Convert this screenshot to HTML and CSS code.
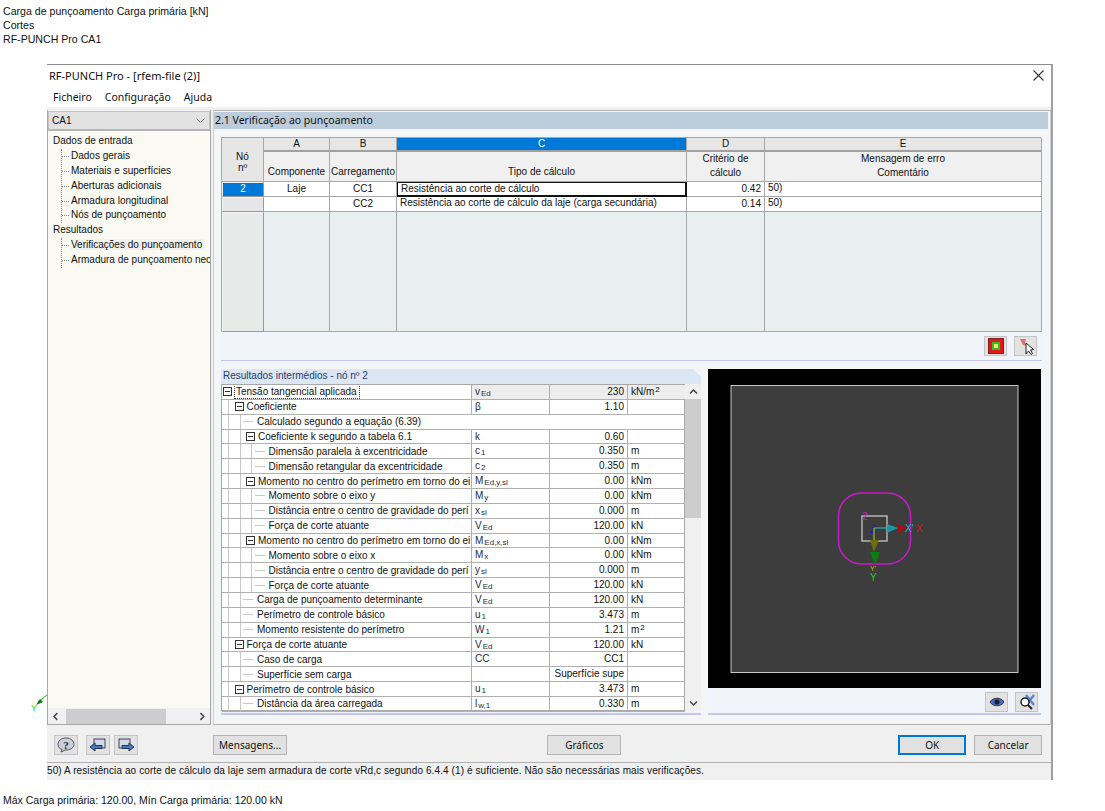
FILE: index.html
```html
<!DOCTYPE html>
<html lang="pt">
<head>
<meta charset="utf-8">
<title>RF-PUNCH Pro</title>
<link rel="stylesheet" href="styles.css">
</head>
<body>
<div class="cap"><div>Carga de punçoamento Carga primária [kN]</div><div>Cortes</div><div>RF-PUNCH Pro CA1</div></div>
<svg class="axis" width="20" height="20" viewBox="0 0 20 20"><path d="M18 1 L9 8" stroke="#00d000" fill="none"/><path d="M11 5 L14 8 L7 11 Z" fill="#007a00"/><text x="2" y="17" class="axt" fill="#00e000">Y</text></svg>
<div class="win">
  <div class="title"><span>RF-PUNCH Pro - [rfem-file (2)]</span>
    <svg width="11" height="11" viewBox="0 0 11 11"><path d="M.5 .5 L10.5 10.5 M10.5 .5 L.5 10.5" stroke="#333" stroke-width="1.1"/></svg></div>
  <div class="menu"><span>Ficheiro</span><span>Configuração</span><span>Ajuda</span></div>
  <div class="body">
    <aside class="side">
      <div class="combo"><span>CA1</span><svg width="9" height="5" viewBox="0 0 9 5"><path d="M.5 .5 L4.5 4.5 L8.500 .5" stroke="#888" fill="none"/></svg></div>
      <div class="tree">
        <div class="t0">Dados de entrada</div>
        <div class="tgroup">
          <div class="t1">Dados gerais</div>
          <div class="t1">Materiais e superfícies</div>
          <div class="t1">Aberturas adicionais</div>
          <div class="t1">Armadura longitudinal</div>
          <div class="t1">Nós de punçoamento</div>
        </div>
        <div class="t0">Resultados</div>
        <div class="tgroup">
          <div class="t1"><span class="sel">Verificações do punçoamento</span></div>
          <div class="t1">Armadura de punçoamento nec</div>
        </div>
      </div>
      <div class="hscroll">
        <svg width="7" height="9" viewBox="0 0 7 9"><path d="M5.5 1 L2 4.5 L5.5 8" stroke="#444" stroke-width="1.5" fill="none"/></svg>
        <div class="hthumb"></div>
        <svg width="7" height="9" viewBox="0 0 7 9"><path d="M1.5 1 L5 4.5 L1.5 8" stroke="#444" stroke-width="1.5" fill="none"/></svg>
      </div>
    </aside>
    <main class="main">
      <div class="head">2.1 Verificação ao punçoamento</div>
      <div class="upper">
        <div class="grid">
          <div class="c hc no">Nó<br>nº</div>
          <div class="c lt">A</div><div class="c lt">B</div><div class="c lt on">C</div><div class="c lt">D</div><div class="c lt">E</div>
          <div class="c hc bot">Componente</div><div class="c hc bot">Carregamento</div><div class="c hc bot">Tipo de cálculo</div>
          <div class="c hc two">Critério de<br>cálculo</div><div class="c hc two">Mensagem de erro<br>Comentário</div>
          <div class="c rh on">2</div><div class="c mid">Laje</div><div class="c mid">CC1</div><div class="c act">Resistência ao corte de cálculo</div><div class="c rt">0.42</div><div class="c txt">50)</div>
          <div class="c rh"></div><div class="c mid"></div><div class="c mid">CC2</div><div class="c txt">Resistência ao corte de cálculo da laje (carga secundária)</div><div class="c rt">0.14</div><div class="c txt">50)</div>
          <div class="c rh emp"></div><div class="c emp"></div><div class="c emp"></div><div class="c emp"></div><div class="c emp"></div><div class="c emp"></div>
        </div>
        <div class="tools">
          <button class="ib"><svg width="16" height="16" viewBox="0 0 16 16"><rect x="0" y="0" width="16" height="16" fill="#7a2020"/><rect x="1" y="1" width="14" height="14" fill="#e01818"/><rect x="4" y="4" width="8" height="8" fill="#38b838"/><rect x="6" y="6" width="4" height="4" fill="#f0f040"/></svg></button>
          <button class="ib"><svg width="18" height="18" viewBox="0 0 18 18"><path d="M3 2 L9 2 L8 6 L10 9 L6 8 Z" fill="#e07070"/><path d="M9 6 L9 17 L11.5 14 L14 17.5 L15.5 16.5 L13.5 13 L16.5 12.5 Z" fill="#fff" stroke="#222"/></svg></button>
        </div>
      </div>
      <div class="lower">
        <div class="res">
          <div class="restitle">Resultados intermédios - nó nº 2</div>
          <div class="reswrap">
            <div class="rtable">
              <div class="n fst"><i class="b"></i><span class="foc">Tensão tangencial aplicada</span></div><div class="s fst">v<sub>Ed</sub></div><div class="v fst">230</div><div class="u fst">kN/m<sup>2</sup></div>
              <div class="n"><i class="g"></i><i class="b"></i>Coeficiente</div><div class="s">β</div><div class="v">1.10</div><div class="u"></div>
              <div class="n wide"><i class="g"></i><i class="g"></i><i class="d"></i>Calculado segundo a equação (6.39)</div>
              <div class="n"><i class="g"></i><i class="g"></i><i class="b"></i>Coeficiente k segundo a tabela 6.1</div><div class="s">k</div><div class="v">0.60</div><div class="u"></div>
              <div class="n"><i class="g"></i><i class="g"></i><i class="g"></i><i class="d"></i>Dimensão paralela à excentricidade</div><div class="s">c<sub>1</sub></div><div class="v">0.350</div><div class="u">m</div>
              <div class="n"><i class="g"></i><i class="g"></i><i class="g"></i><i class="d"></i>Dimensão retangular da excentricidade</div><div class="s">c<sub>2</sub></div><div class="v">0.350</div><div class="u">m</div>
              <div class="n"><i class="g"></i><i class="g"></i><i class="b"></i>Momento no centro do perímetro em torno do ei</div><div class="s">M<sub>Ed,y,sl</sub></div><div class="v">0.00</div><div class="u">kNm</div>
              <div class="n"><i class="g"></i><i class="g"></i><i class="g"></i><i class="d"></i>Momento sobre o eixo y</div><div class="s">M<sub>y</sub></div><div class="v">0.00</div><div class="u">kNm</div>
              <div class="n"><i class="g"></i><i class="g"></i><i class="g"></i><i class="d"></i>Distância entre o centro de gravidade do perí</div><div class="s">x<sub>sl</sub></div><div class="v">0.000</div><div class="u">m</div>
              <div class="n"><i class="g"></i><i class="g"></i><i class="g"></i><i class="d"></i>Força de corte atuante</div><div class="s">V<sub>Ed</sub></div><div class="v">120.00</div><div class="u">kN</div>
              <div class="n"><i class="g"></i><i class="g"></i><i class="b"></i>Momento no centro do perímetro em torno do ei</div><div class="s">M<sub>Ed,x,sl</sub></div><div class="v">0.00</div><div class="u">kNm</div>
              <div class="n"><i class="g"></i><i class="g"></i><i class="g"></i><i class="d"></i>Momento sobre o eixo x</div><div class="s">M<sub>x</sub></div><div class="v">0.00</div><div class="u">kNm</div>
              <div class="n"><i class="g"></i><i class="g"></i><i class="g"></i><i class="d"></i>Distância entre o centro de gravidade do perí</div><div class="s">y<sub>sl</sub></div><div class="v">0.000</div><div class="u">m</div>
              <div class="n"><i class="g"></i><i class="g"></i><i class="g"></i><i class="d"></i>Força de corte atuante</div><div class="s">V<sub>Ed</sub></div><div class="v">120.00</div><div class="u">kN</div>
              <div class="n"><i class="g"></i><i class="g"></i><i class="d"></i>Carga de punçoamento determinante</div><div class="s">V<sub>Ed</sub></div><div class="v">120.00</div><div class="u">kN</div>
              <div class="n"><i class="g"></i><i class="g"></i><i class="d"></i>Perímetro de controle básico</div><div class="s">u<sub>1</sub></div><div class="v">3.473</div><div class="u">m</div>
              <div class="n"><i class="g"></i><i class="g"></i><i class="d"></i>Momento resistente do perímetro</div><div class="s">W<sub>1</sub></div><div class="v">1.21</div><div class="u">m<sup>2</sup></div>
              <div class="n"><i class="g"></i><i class="b"></i>Força de corte atuante</div><div class="s">V<sub>Ed</sub></div><div class="v">120.00</div><div class="u">kN</div>
              <div class="n"><i class="g"></i><i class="g"></i><i class="d"></i>Caso de carga</div><div class="s">CC</div><div class="v">CC1</div><div class="u"></div>
              <div class="n"><i class="g"></i><i class="g"></i><i class="d"></i>Superfície sem carga</div><div class="s"></div><div class="v">Superfície supe</div><div class="u"></div>
              <div class="n"><i class="g"></i><i class="b"></i>Perímetro de controle básico</div><div class="s">u<sub>1</sub></div><div class="v">3.473</div><div class="u">m</div>
              <div class="n"><i class="g"></i><i class="g"></i><i class="d"></i>Distância da área carregada</div><div class="s">l<sub>w,1</sub></div><div class="v">0.330</div><div class="u">m</div>
            </div>
            <div class="vscroll">
              <svg width="9" height="7" viewBox="0 0 9 7"><path d="M1 5.5 L4.5 2 L8 5.5" stroke="#444" stroke-width="1.5" fill="none"/></svg>
              <div class="vthumb"></div>
              <svg width="9" height="7" viewBox="0 0 9 7"><path d="M1 1.5 L4.5 5 L8 1.5" stroke="#444" stroke-width="1.5" fill="none"/></svg>
            </div>
          </div>
        </div>
        <div class="viewcol">
          <svg class="view" width="333" height="319" viewBox="708 369 333 319">
            <rect x="708" y="369" width="333" height="319" fill="#000"/>
            <rect x="731" y="385.500" width="287" height="287" fill="#3d3d3d" stroke="#c8c8c8"/>
            <rect x="838.500" y="493" width="72" height="71" rx="23" fill="none" stroke="#c81cc8" stroke-width="1.5"/>
            <rect x="862" y="516" width="25" height="25" fill="none" stroke="#b4b4b4" stroke-width="1.5"/>
            <text x="862" y="520" class="vt" fill="#c81cc8">2</text>
            <text x="870" y="533" class="vt" fill="#1818c8">Z</text>
            <path d="M874 528 H888" stroke="#20d0d0"/>
            <path d="M874 528 V541" stroke="#d0d020"/>
            <path d="M887 524 L898 528 L887 533 Z" fill="#149aa8"/>
            <path d="M898 524 L908 528 L898 533 Z" fill="#a01010"/>
            <path d="M870 540 H879 L874 552 Z" fill="#6e6e10"/>
            <path d="M870 552 H880 L875 565 Z" fill="#0c800c"/>
            <text x="905" y="532" class="vt" fill="#20c0c0">X'</text>
            <text x="916" y="532" class="vt" fill="#d02020">X</text>
            <text x="870" y="571" class="vs" fill="#c0c030">Y'</text>
            <text x="870" y="581" class="vt" fill="#20d020">Y</text>
          </svg>
          <div class="tools2">
            <button class="ib"><svg width="16" height="12" viewBox="0 0 16 12"><path d="M1 6 C4 1 12 1 15 6 C12 11 4 11 1 6 Z" fill="#4a6cc0" stroke="#334"/><circle cx="8" cy="6" r="2.500" fill="#123"/></svg></button>
            <button class="ib"><svg width="18" height="18" viewBox="0 0 18 18"><path d="M8 2 L16 12 M16 2 L8 12" stroke="#5a84d0" stroke-width="2.500"/><circle cx="7" cy="9" r="4" fill="#fff" stroke="#222" stroke-width="1.500"/><path d="M10 12 L14 16" stroke="#222" stroke-width="2"/></svg></button>
          </div>
        </div>
      </div>
    </main>
  </div>
  <div class="actions">
    <div class="ag">
      <button class="ib big"><svg width="20" height="16" viewBox="0 0 20 16"><path d="M10 1 C5 1 2 4 2 7.500 C2 10 4 12 6 12.500 L5 15 L9.500 13 C14 13 18 11 18 7.500 C18 4 15 1 10 1 Z" fill="#c9cfda" stroke="#555"/><text x="10" y="12" class="q" fill="#223">?</text></svg></button>
      <button class="ib big sp"><svg width="18" height="16" viewBox="0 0 18 16"><rect x="5" y="2" width="11" height="9" fill="#cfd9ea" stroke="#445"/><path d="M1 10 L6 6 V8.500 H13 V11.500 H6 V14 Z" fill="#4a78c8" stroke="#234"/></svg></button>
      <button class="ib big"><svg width="18" height="16" viewBox="0 0 18 16"><rect x="2" y="2" width="11" height="9" fill="#cfd9ea" stroke="#445"/><path d="M17 10 L12 6 V8.500 H5 V11.500 H12 V14 Z" fill="#4a78c8" stroke="#234"/></svg></button>
    </div>
    <button class="btn msg">Mensagens...</button>
    <button class="btn gfx">Gráficos</button>
    <button class="btn ok">OK</button>
    <button class="btn">Cancelar</button>
  </div>
  <div class="status">50) A resistência ao corte de cálculo da laje sem armadura de corte vRd,c segundo 6.4.4 (1) é suficiente. Não são necessárias mais verificações.</div>
</div>
<div class="foot">Máx Carga primária: 120.00, Mín Carga primária: 120.00 kN</div>
</body>
</html>
```
FILE: styles.css
```css
* { box-sizing: border-box; }
html, body { margin: 0; padding: 0; }
body { width: 1105px; height: 811px; background: #fff; color: #111; font: 10px/14px "Liberation Sans", sans-serif; position: relative; overflow: hidden; }
.cap { padding: 4px 0 0 3px; height: 64px; font: 10.6px/14px "Liberation Sans", sans-serif; }
.axis { position: absolute; left: 29px; top: 694px; }
.axt { font: 9px "Liberation Sans", sans-serif; }
.win { margin-left: 47px; width: 1006px; height: 716px; border-top: 1px solid #8c8c8c; border-right: 2px solid #a0a0a0; display: flex; flex-direction: column; background: #f0f0f0; }
.title { height: 21px; background: #fff; display: flex; align-items: center; justify-content: space-between; padding: 0 7px 0 2px; font: 11px/14px "Noto Sans", sans-serif; }
.menu { height: 21px; background: #fff; display: flex; gap: 13px; align-items: center; padding-left: 6px; font: 10.5px/14px "Noto Sans", sans-serif; }
.body { display: flex; height: 618px; gap: 2px; padding-top: 3px; }
.side { width: 164px; display: flex; flex-direction: column; border: 1px solid #a8a8a8; border-top: none; }
.combo { height: 20px; background: #e2e2e2; border: 1px solid #c4c4c4; border-bottom: 2px solid #b4b4b4; display: flex; align-items: center; justify-content: space-between; padding: 0 4px 0 3px; margin-top: 1px; }
.tree { flex: 1; background: #fbfaf2; padding: 3px 0 0 5px; line-height: 14.875px; }
.tgroup { margin-left: 8px; border-left: 1px dotted #888; }
.t1 { padding-left: 9px; position: relative; white-space: nowrap; overflow: hidden; }
.t1::before { content: ""; position: absolute; left: 0; top: 7px; width: 7px; border-top: 1px dotted #888; }
.sel { background: #f1f1ee; padding-right: 2px; }
.hscroll { height: 16px; background: #f0f0f0; display: flex; align-items: center; padding: 0 4px; gap: 7px; }
.hthumb { width: 104px; height: 15px; background: #cdcdcd; margin-right: 26px; }
.hscroll svg:last-child { margin-left: auto; }
.main { width: 838px; border: 1px solid #d0d0d0; border-top: 1px solid #b0b0b0; border-bottom: 1px solid #b0b0b0; background: #f3f5f6; display: flex; flex-direction: column; padding: 1px 2px 0 0; }
.head { height: 17px; background: #bdccda; padding-left: 1px; font: 10.5px/16px "Noto Sans", sans-serif; }
.upper { margin: 8px 0 0 7px; width: 821px; height: 224px; border-bottom: 1px solid #c6c6ea; background: #f1f4fa; }
.grid { display: grid; width: 820px; grid-template-columns: 42px 66px 67px 290px 78px 277px; grid-template-rows: 14px 30px 15px 15px 120px; border-top: 1px solid #a8a8a8; border-left: 1px solid #a8a8a8; }
.c { border-right: 1px solid #a8a8a8; border-bottom: 1px solid #a8a8a8; background: #fff; white-space: nowrap; overflow: hidden; }
.hc { background: #f0f0f0; text-align: center; }
.no { grid-row: span 2; background: #e6e6e6; line-height: 11px; padding-top: 13px; }
.lt { background: #e6e6e6; text-align: center; line-height: 12px; border-bottom: 2px solid #a0a0a0; }
.on { background: #0078d7; color: #fff; }
.bot { padding-top: 13px; }
.two { padding-top: 0; line-height: 14px; }
.rh { background: #e6e6e6; text-align: center; line-height: 11px; border: 1px solid #f4f4f4; border-right-color: #999; border-bottom-color: #999; }
.rh.on { background: #0078d7; }
.mid { text-align: center; line-height: 13px; }
.act { border: 1px solid #111; border-width: 1px 2px 2px 1px; padding-left: 3px; line-height: 11px; }
.txt { padding-left: 3px; line-height: 12px; }
.rt { text-align: right; padding-right: 3px; line-height: 13px; }
.emp { background: #e9eeee; }
.rh.emp { background: #e8eaea; }
.tools, .tools2 { display: flex; justify-content: flex-end; gap: 7px; padding: 4px 5px 0 0; }
.ib { width: 23px; height: 20px; border: 1px solid #c4c4c4; background: #e2e2e2; padding: 0; display: flex; align-items: center; justify-content: center; }
.lower { display: flex; gap: 7px; margin: 8px 0 0 7px; height: 346px; }
.res { width: 480px; background: #f1f4fa; border-bottom: 2px solid #c6c6ea; height: 346px; }
.restitle { height: 15px; background: #dde6f3; padding-left: 2px; line-height: 14px; color: #1a3f6f; clip-path: polygon(0 0, 472px 0, 100% 8px, 100% 100%, 0 100%); }
.reswrap { display: flex; align-items: stretch; }
.rtable { width: 464px; height: 327px; display: grid; grid-template-columns: 250px 78px 78px 57px; grid-auto-rows: 14.86px; border: 1px solid #a8a8a8; background: #fff; }
.n, .s, .v, .u { border-bottom: 1px solid #b0b0b0; border-right: 1px solid #b0b0b0; white-space: nowrap; overflow: hidden; line-height: 13px; }
.u { border-right: none; padding-left: 3px; }
.n { display: flex; align-items: center; }
.s { padding-left: 3px; color: #1c2c44; }
.v { text-align: right; padding-right: 3px; }
.wide { grid-column: span 4; border-right: none; }
.fst { background: #ededed; }
.n.fst { background: #fff; }
.foc { outline: 1px dotted #333; padding: 0 2px 0 1px; }
sub, sup { font-size: 8px; line-height: 0; margin-left: 1px; }
sub { vertical-align: -1px; }
sup { vertical-align: 3px; }
.g { flex: 0 0 11.5px; align-self: stretch; background: linear-gradient(#c8c8c8, #c8c8c8) 6px 0 / 1px 100% no-repeat; }
.b { flex: 0 0 9px; height: 9px; margin: 0 3px 0 1px; border: 1px solid #333; background: linear-gradient(#333, #333) center / 5px 1px no-repeat #fff; }
.d { flex: 0 0 10px; height: 1px; background: #c8c8c8; margin: 0 4px 0 -2px; }
.vscroll { width: 16px; background: #f0f0f0; height: 327px; display: flex; flex-direction: column; align-items: center; justify-content: space-between; padding: 4px 0; position: relative; }
.vthumb { position: absolute; left: 0; right: 0; top: 15px; height: 119px; background: #cdcdcd; }
.viewcol { width: 333px; }
.view { display: block; }
.vt { font: 10px "Liberation Sans", sans-serif; }
.vs { font: 7px "Liberation Sans", sans-serif; }
.tools2 { padding: 4px 3px 0 0; background: #f1f4fa; height: 27px; border-bottom: 2px solid #c6c6ea; }
.actions { flex: 1; display: flex; align-items: flex-start; padding: 10px 9px 0 7px; border-bottom: 1px solid #b0b0b0; height: 37px; }
.ag { display: flex; gap: 4px; width: 159px; }
.big { width: 24px; }
.sp { margin-left: 4px; }
.btn { height: 20px; width: 68px; border: 1px solid #b4b4b4; background: #e1e1e1; font: 10px/16px "Noto Sans", sans-serif; color: #111; padding: 0; }
.msg { width: 75px; }
.gfx { width: 74px; margin-left: 260px; margin-right: 277px; }
.ok { border: 2px solid #0078d7; margin-right: 8px; }
.status { height: 17px; font: 10px/16px "Liberation Sans", sans-serif; letter-spacing: .1px; }
.foot { padding: 13px 0 0 3px; font: 10.5px/14px "Liberation Sans", sans-serif; }
.q { font: bold 11px "Liberation Serif", serif; text-anchor: middle; }
```
